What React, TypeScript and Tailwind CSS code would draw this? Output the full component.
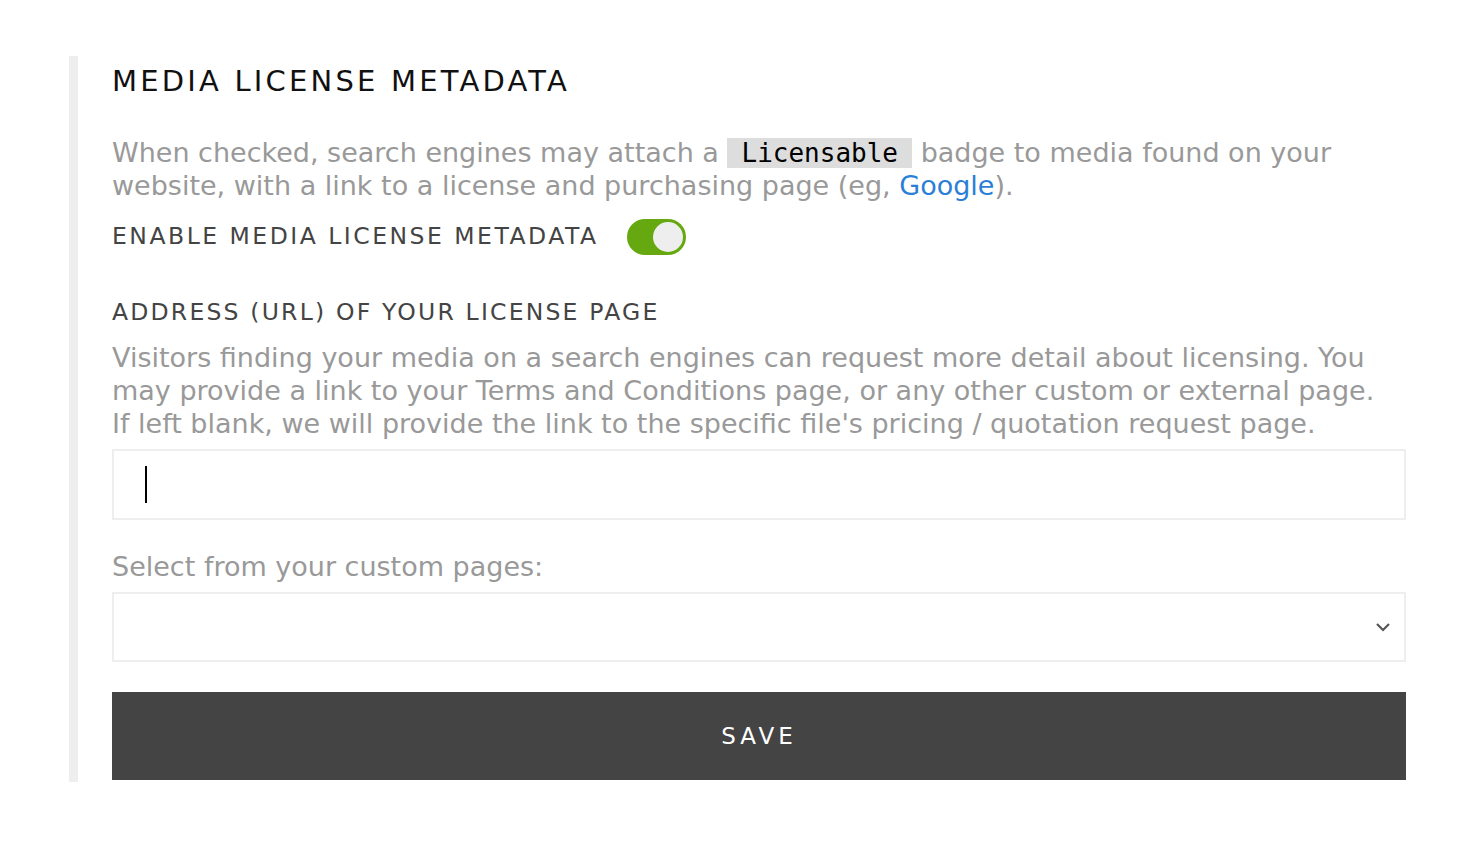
import React from "react";

const font = { fontFamily: "'DejaVu Sans', 'Noto Sans', sans-serif" };

const Toggle = () => (
  <div className="flex h-[36px] w-[59px] items-center justify-end rounded-full bg-[#66a80f] p-[3px]">
    <div className="h-[30px] w-[30px] rounded-full bg-[#eeeeee]" />
  </div>
);

export default function App() {
  return (
    <div className="min-h-screen bg-white pl-[69px] pr-[67px] pt-[56px]" style={font}>
      <div className="border-l-[9px] border-[#eeeeee] pb-[2px] pl-[34px]">
        <h2 className="text-[29px] leading-[50px] tracking-[3.2px] text-[#111]">MEDIA LICENSE METADATA</h2>

        <p className="mt-[30px] text-[27px] leading-[33px] text-[#999]">
          When checked, search engines may attach a{" "}
          <code className="inline-block bg-[#dddddd] px-[14px] font-['DejaVu_Sans_Mono',monospace] text-[26px] leading-[30px] text-black">
            Licensable
          </code>{" "}
          badge to media found on your website, with a link to a license and purchasing page (eg,{" "}
          <a className="text-[#2b7fd6]">Google</a>).
        </p>

        <div className="mt-[17px] flex items-center gap-[28px]">
          <span className="text-[23.5px] tracking-[2.5px] text-[#444]">ENABLE MEDIA LICENSE METADATA</span>
          <Toggle />
        </div>

        <h3 className="mt-[41px] text-[23.5px] leading-[33px] tracking-[2.2px] text-[#444]">
          ADDRESS (URL) OF YOUR LICENSE PAGE
        </h3>
        <p className="mt-[12px] max-w-[1275px] text-[27px] leading-[33px] text-[#999]">
          Visitors finding your media on a search engines can request more detail about licensing. You may provide a
          link to your Terms and Conditions page, or any other custom or external page. If left blank, we will provide
          the link to the specific file's pricing / quotation request page.
        </p>

        <div className="mt-[9px] flex h-[71px] items-center border-2 border-[#eeeeee] pl-[31px]">
          <div className="h-[37px] w-[2px] bg-black" />
        </div>

        <p className="mt-[30px] text-[27px] leading-[33px] text-[#999]">Select from your custom pages:</p>

        <div className="mt-[9px] flex h-[70px] items-center justify-end border-2 border-[#eeeeee] pr-[12px]">
          <svg width="18" height="12" viewBox="0 0 18 12" fill="none">
            <path d="M3 3l6 6 6-6" stroke="#555" strokeWidth="2.2" />
          </svg>
        </div>

        <button className="mt-[30px] flex h-[88px] w-full items-center justify-center bg-[#444444] text-[23px] tracking-[4px] text-white">
          SAVE
        </button>
      </div>
    </div>
  );
}
